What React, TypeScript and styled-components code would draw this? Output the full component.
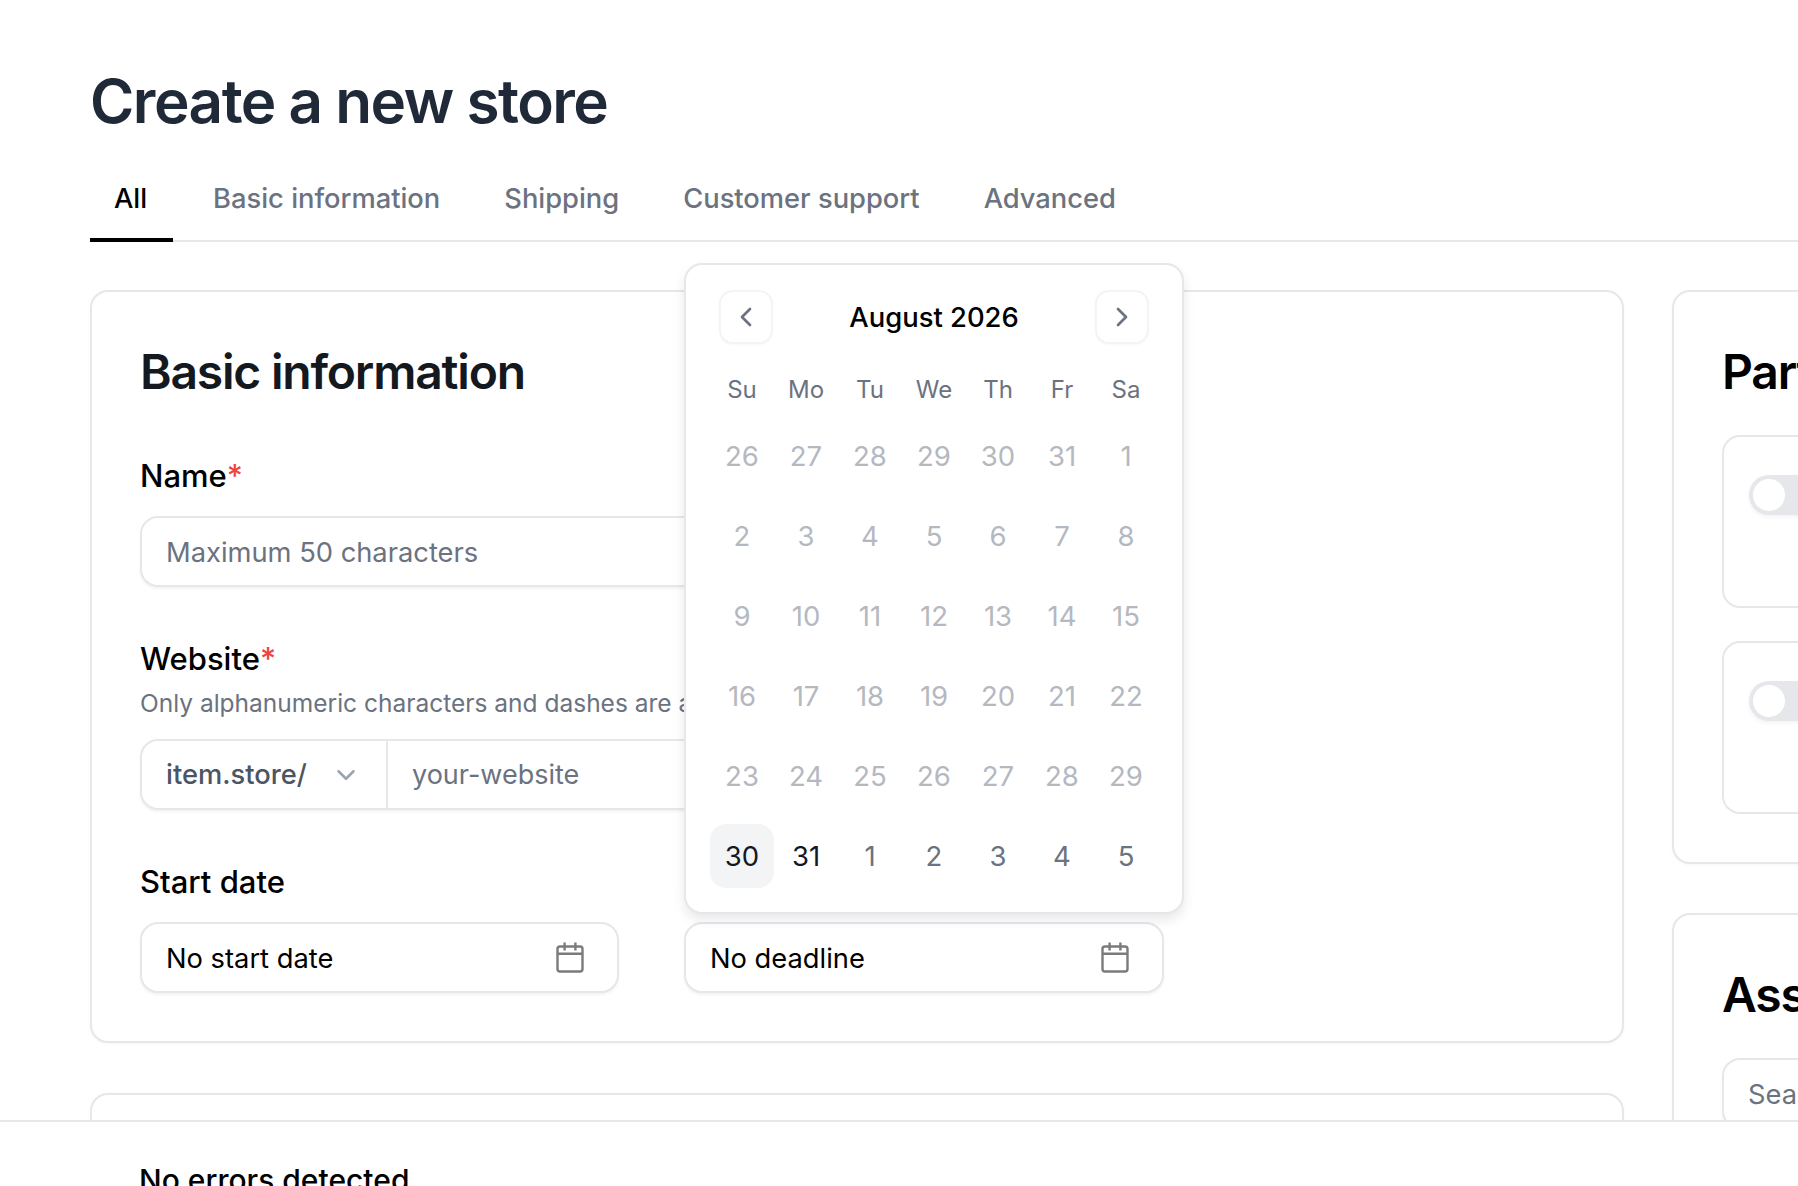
import styled, { createGlobalStyle } from "styled-components";
import { ChevronDown, ChevronLeft, ChevronRight } from "lucide-react";

const GlobalStyle = createGlobalStyle`
  html, body {
    margin: 0;
    height: 100%;
    background: #fff;
    font-family: Inter, "Liberation Sans", sans-serif;
  }
  * { box-sizing: border-box; }
`;

const Page = styled.div`
  height: 100vh;
  display: flex;
  flex-direction: column;
  overflow: hidden;
`;
const Main = styled.main`
  flex: 1;
  min-height: 0;
  overflow: hidden;
  padding: 66px 0 0 90px;
`;
const Title = styled.h1`
  margin: 0;
  height: 72px;
  font-size: 60.2px;
  line-height: 72px;
  font-weight: 600;
  letter-spacing: -0.025em;
  color: #1f2937;
`;
const Tabs = styled.nav`
  margin-top: 29px;
  height: 75px;
  display: flex;
  gap: 16px;
  border-bottom: 2px solid #e5e7eb;
`;
const Tab = styled.div<{ $active?: boolean }>`
  height: 75px;
  padding: 0 ${({ $active }) => ($active ? "26px" : "24px")} 9px 24px;
  display: flex;
  align-items: center;
  font-size: 27.3px;
  font-weight: 500;
  color: ${({ $active }) => ($active ? "#000" : "#6b7280")};
  border-bottom: 4px solid ${({ $active }) => ($active ? "#000" : "transparent")};
`;
const Columns = styled.div`
  margin-top: 48px;
  display: grid;
  grid-template-columns: 1534px 520px;
  column-gap: 48px;
  align-items: start;
`;
const Stack = styled.div`
  display: flex;
  flex-direction: column;
  gap: 50px;
`;
const SideStack = styled(Stack)`
  gap: 49px;
`;
const Card = styled.section`
  padding: 50px 49px 48px 48px;
  background: #fff;
  border: 2px solid #e5e7eb;
  border-radius: 18px;
  box-shadow: 0 1px 3px rgba(0, 0, 0, 0.04);
`;
const EmptyCard = styled(Card)`
  height: 400px;
`;
const CardTitle = styled.h2`
  margin: 0;
  height: 60px;
  font-size: 48px;
  line-height: 60px;
  font-weight: 600;
  letter-spacing: -0.025em;
  color: #14181f;
`;
const SideTitle = styled(CardTitle)`
  color: #000;
`;
const Form = styled.div`
  margin-top: 54px;
  width: 1024px;
  display: flex;
  flex-direction: column;
  gap: 52px;
`;
const Field = styled.div`
  display: flex;
  flex-direction: column;
`;
const Label = styled.label`
  height: 40px;
  font-size: 31px;
  line-height: 40px;
  font-weight: 500;
  color: #000;
`;
const Required = styled.span`
  color: #ef4444;
`;
const Hint = styled.p`
  margin: 7px 0 0;
  height: 34px;
  font-size: 24.5px;
  line-height: 34px;
  white-space: nowrap;
  color: #6b7280;
`;
const Box = styled.div`
  height: 71px;
  display: flex;
  align-items: center;
  background: #fff;
  border: 2px solid #e5e7eb;
  border-radius: 18px;
  box-shadow: 0 2px 3px rgba(0, 0, 0, 0.05);
  font-size: 27.3px;
`;
const TextBox = styled(Box)`
  margin-top: 20px;
  padding: 2px 24px 0;
  color: #6b7280;
`;
const GroupBox = styled(Box)`
  margin-top: 19px;
`;
const Prefix = styled.div`
  width: 246px;
  height: 100%;
  flex-shrink: 0;
  padding: 0 25px 0 24px;
  display: flex;
  align-items: center;
  justify-content: space-between;
  border-right: 2px solid #e5e7eb;
  color: #4b5563;
  font-weight: 500;

  svg {
    color: #9ca3af;
  }
`;
const Slug = styled.div`
  padding: 0 24px;
  font-size: 27px;
  color: #6b7280;
`;
const DateRow = styled.div`
  display: grid;
  grid-template-columns: 479px 480px;
  column-gap: 65px;
`;
const DateBox = styled(Box)`
  margin-top: 20px;
  padding: 1px 31px 0 24px;
  justify-content: space-between;
  color: #000;

  svg {
    color: #7b7b7b;
  }
`;
const DeadlineWrap = styled.div`
  position: relative;
`;
const Popover = styled.div`
  position: absolute;
  left: 0;
  bottom: calc(100% - 12px);
  width: 500px;
  padding: 25px 24px 24px;
  background: #fff;
  border: 2px solid #e5e7eb;
  border-radius: 18px;
  box-shadow: 0 6px 12px rgba(0, 0, 0, 0.09);
`;
const PopoverHead = styled.div`
  height: 54px;
  padding: 0 9px;
  display: flex;
  align-items: center;
  justify-content: space-between;
  font-size: 27.4px;
  font-weight: 500;
  color: #000;
`;
const NavButton = styled.button`
  width: 54px;
  height: 54px;
  padding: 0;
  display: flex;
  align-items: center;
  justify-content: center;
  background: #fff;
  border: 2px solid #f3f4f6;
  border-radius: 14px;
  box-shadow: 0 1px 2px rgba(0, 0, 0, 0.03);
  color: #6b7280;
`;
const Weekdays = styled.div`
  margin-top: 27px;
  display: grid;
  grid-template-columns: repeat(7, 64px);
`;
const Weekday = styled.div`
  height: 36px;
  display: flex;
  align-items: center;
  justify-content: center;
  font-size: 24px;
  color: #6b7280;
`;
const Days = styled.div`
  margin-top: 17px;
  display: grid;
  grid-template-columns: repeat(7, 64px);
  row-gap: 16px;
`;
const Day = styled.div<{ $tone: "muted" | "next" | "current"; $selected?: boolean }>`
  height: 64px;
  display: flex;
  align-items: center;
  justify-content: center;
  font-size: 27.5px;
  border-radius: 16px;
  background: ${({ $selected }) => ($selected ? "#f3f4f6" : "transparent")};
  color: ${({ $tone }) =>
    $tone === "muted" ? "#b4b8c1" : $tone === "next" ? "#6b7280" : "#111827"};
`;
const Footer = styled.footer`
  height: 66px;
  flex-shrink: 0;
  padding: 40px 0 0 139px;
  background: #fff;
  border-top: 2px solid #e5e7eb;
  overflow: hidden;
  font-size: 30px;
  line-height: 36px;
  font-weight: 500;
  color: #000;
`;
const SideList = styled.div`
  margin-top: 33px;
  display: flex;
  flex-direction: column;
  gap: 33px;
`;
const Option = styled.div`
  height: 173px;
  padding: 38px 25px;
  border: 2px solid #e5e7eb;
  border-radius: 18px;
  display: flex;
  gap: 20px;
  font-size: 27px;
`;
const Toggle = styled.div`
  width: 72px;
  height: 40px;
  flex-shrink: 0;
  padding: 4px;
  background: #e5e7eb;
  border-radius: 20px;
  box-shadow: 0 2px 4px rgba(0, 0, 0, 0.05);
`;
const Thumb = styled.div`
  width: 32px;
  height: 32px;
  background: #fff;
  border-radius: 50%;
`;
const SearchBox = styled(TextBox)`
  margin-top: 33px;
`;

const WEEKDAYS = ["Su", "Mo", "Tu", "We", "Th", "Fr", "Sa"];
const MUTED_DAYS = [
  26, 27, 28, 29, 30, 31, 1, 2, 3, 4, 5, 6, 7, 8, 9, 10, 11, 12, 13, 14, 15, 16, 17, 18,
  19, 20, 21, 22, 23, 24, 25, 26, 27, 28, 29,
];

const CalendarIcon = () => (
  <svg width="32" height="32" viewBox="0 0 32 32" fill="none" stroke="currentColor" strokeWidth="2.4">
    <rect x="3.5" y="4.5" width="25" height="25" rx="2.5" />
    <path d="M3.5 11.7h25M10.6 0.6v8M21.4 0.6v8" />
  </svg>
);

const App = () => {
  return (
    <Page>
      <GlobalStyle />
      <Main>
        <Title>Create a new store</Title>
        <Tabs>
          <Tab $active>All</Tab>
          <Tab>Basic information</Tab>
          <Tab>Shipping</Tab>
          <Tab>Customer support</Tab>
          <Tab>Advanced</Tab>
        </Tabs>
        <Columns>
          <Stack>
            <Card>
              <CardTitle>Basic information</CardTitle>
              <Form>
                <Field>
                  <Label>
                    Name<Required>*</Required>
                  </Label>
                  <TextBox>Maximum 50 characters</TextBox>
                </Field>
                <Field>
                  <Label>
                    Website<Required>*</Required>
                  </Label>
                  <Hint>Only alphanumeric characters and dashes are allowed</Hint>
                  <GroupBox>
                    <Prefix>
                      item.store/
                      <ChevronDown size={30} strokeWidth={2} />
                    </Prefix>
                    <Slug>your-website</Slug>
                  </GroupBox>
                </Field>
                <DateRow>
                  <Field>
                    <Label>Start date</Label>
                    <DateBox>
                      No start date
                      <CalendarIcon />
                    </DateBox>
                  </Field>
                  <Field>
                    <Label>Deadline</Label>
                    <DeadlineWrap>
                      <Popover>
                        <PopoverHead>
                          <NavButton>
                            <ChevronLeft size={32} strokeWidth={2} />
                          </NavButton>
                          August 2026
                          <NavButton>
                            <ChevronRight size={32} strokeWidth={2} />
                          </NavButton>
                        </PopoverHead>
                        <Weekdays>
                          {WEEKDAYS.map((day) => (
                            <Weekday key={day}>{day}</Weekday>
                          ))}
                        </Weekdays>
                        <Days>
                          {MUTED_DAYS.map((day, idx) => (
                            <Day key={idx} $tone="muted">
                              {day}
                            </Day>
                          ))}
                          <Day $tone="current" $selected>
                            30
                          </Day>
                          <Day $tone="current">31</Day>
                          {[1, 2, 3, 4, 5].map((day) => (
                            <Day key={day} $tone="next">
                              {day}
                            </Day>
                          ))}
                        </Days>
                      </Popover>
                      <DateBox>
                        No deadline
                        <CalendarIcon />
                      </DateBox>
                    </DeadlineWrap>
                  </Field>
                </DateRow>
              </Form>
            </Card>
            <EmptyCard />
          </Stack>
          <SideStack>
            <Card>
              <SideTitle>Partners</SideTitle>
              <SideList>
                <Option>
                  <Toggle>
                    <Thumb />
                  </Toggle>
                </Option>
                <Option>
                  <Toggle>
                    <Thumb />
                  </Toggle>
                </Option>
              </SideList>
            </Card>
            <Card>
              <SideTitle>Assignees</SideTitle>
              <SearchBox>Search</SearchBox>
            </Card>
          </SideStack>
        </Columns>
      </Main>
      <Footer>No errors detected</Footer>
    </Page>
  );
};

export default App;
